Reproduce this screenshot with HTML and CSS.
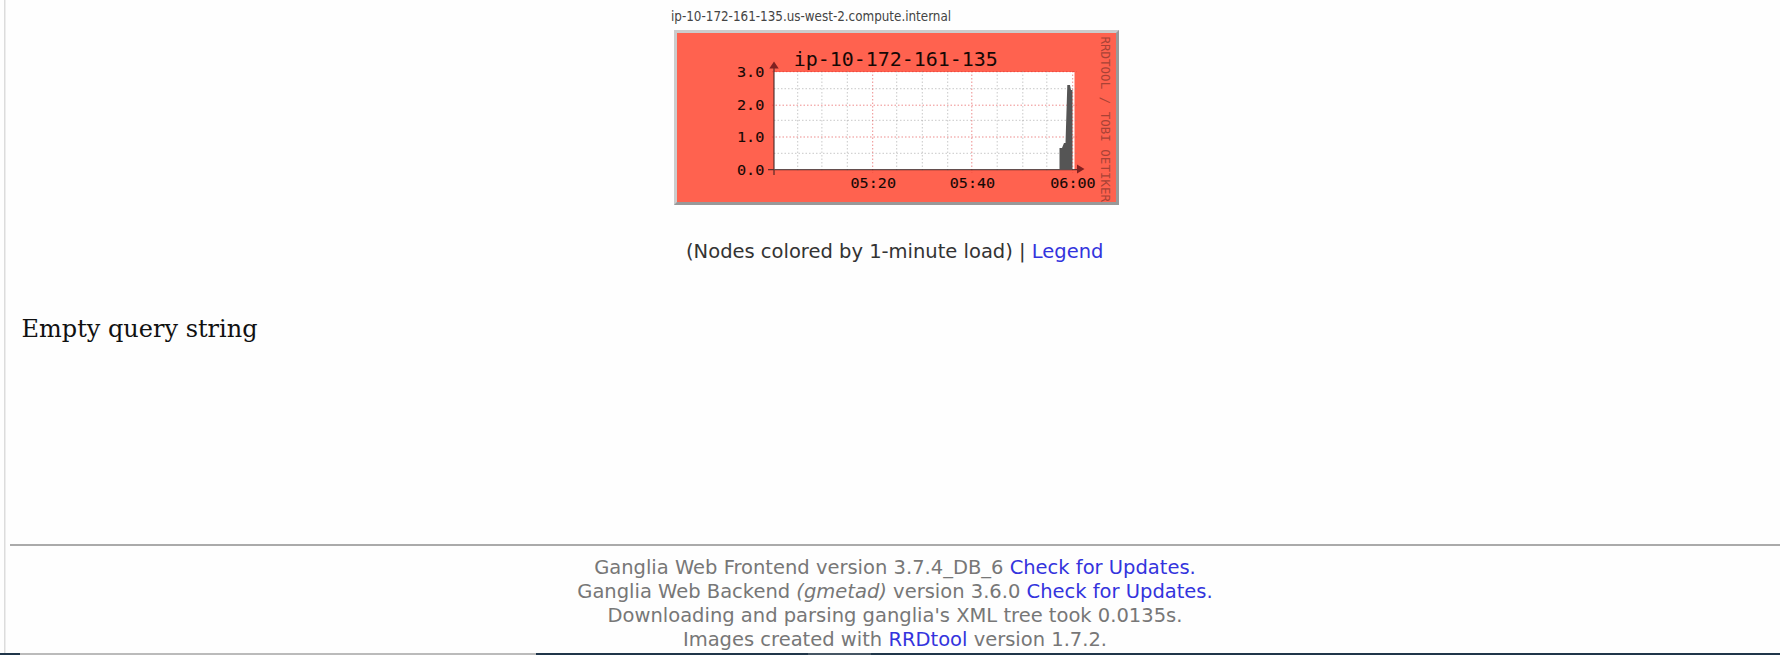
FILE: index.html
```html
<!DOCTYPE html>
<html lang="en">
<head>
<meta charset="utf-8">
<title>Ganglia</title>
<link rel="stylesheet" href="styles.css">
</head>
<body>
<div class="page">
  <main class="content">
    <section class="node">
      <div class="host">ip-10-172-161-135.us-west-2.compute.internal</div>
      <a class="graph">
        <svg width="439" height="169" viewBox="677 33 439 169">
          <rect x="774" y="72" width="300.5" height="98" fill="#fff"/>
          <g class="minor">
            <path d="M774 88.7H1077M774 120.3H1077M774 153.3H1077"/>
            <path d="M797.7 71V171M821.9 71V171M847.3 71V171M896.7 71V171M922.3 71V171M947.7 71V171M997.2 71V171M1022.8 71V171M1046.8 71V171"/>
          </g>
          <g class="major">
            <path d="M772 71.7H1077M772 105.2H1077M772 137H1077"/>
            <path d="M872.7 71V173M971.8 71V173"/>
          </g>
          <path d="M1059.5 169V148H1062L1064 143H1065.5L1067.3 85H1070L1071 90H1072.5V169Z" fill="#555"/>
          <path class="major" d="M1072.7 71V173"/>
          <path class="axis" d="M774 67V175M768 169.6H1080"/>
          <path class="arrow" d="M774 61.5L778.7 68.5H769.3ZM1084.5 169L1077 164.5V173.5Z"/>
          <text class="title" x="793.7" y="65.6" textLength="204" lengthAdjust="spacingAndGlyphs">ip-10-172-161-135</text>
          <g class="ticks">
            <text x="736.9" y="77.4" textLength="27.5" lengthAdjust="spacingAndGlyphs">3.0</text>
            <text x="736.9" y="110.4" textLength="27.5" lengthAdjust="spacingAndGlyphs">2.0</text>
            <text x="736.9" y="142" textLength="27.5" lengthAdjust="spacingAndGlyphs">1.0</text>
            <text x="736.9" y="174.9" textLength="27.5" lengthAdjust="spacingAndGlyphs">0.0</text>
            <text x="850.5" y="188.4" textLength="45.5" lengthAdjust="spacingAndGlyphs">05:20</text>
            <text x="949.7" y="188.4" textLength="45.5" lengthAdjust="spacingAndGlyphs">05:40</text>
            <text x="1050.2" y="188.4" textLength="45.5" lengthAdjust="spacingAndGlyphs">06:00</text>
          </g>
          <text class="mark" transform="translate(1101.4 36.5) rotate(90)" textLength="165.5" lengthAdjust="spacingAndGlyphs">RRDTOOL / TOBI OETIKER</text>
        </svg>
      </a>
    </section>
    <p class="note">(Nodes colored by 1-minute load) | <a>Legend</a></p>
    <p class="empty">Empty query string</p>
  </main>
  <footer class="footer">
    <div>Ganglia Web Frontend version 3.7.4_DB_6 <a>Check for Updates.</a></div>
    <div>Ganglia Web Backend <i>(gmetad)</i> version 3.6.0 <a>Check for Updates.</a></div>
    <div>Downloading and parsing ganglia's XML tree took 0.0135s.</div>
    <div>Images created with <a>RRDtool</a> version 1.7.2.</div>
  </footer>
  <div class="taskbar"><i class="grip"></i><i class="track"></i><i class="gap"></i><i class="thumb"></i></div>
</div>
</body>
</html>
```
FILE: styles.css
```css
body { margin: 0; background: #fefefe; }
.page {
  box-sizing: border-box;
  width: 1780px;
  height: 655px;
  display: flex;
  flex-direction: column;
  overflow: hidden;
  background: linear-gradient(#dcdcdc, #dcdcdc) 3.5px 0 / 1.5px 653px no-repeat;
}
.content { height: 544px; flex: none; }
.node { padding: 6px 0 0 671px; }
.host {
  height: 24px;
  font: 13.3px/22px "DejaVu Sans Condensed", "DejaVu Sans", sans-serif;
  font-stretch: condensed;
  color: #444;
  white-space: nowrap;
}
.graph {
  display: block;
  width: 439px;
  height: 169px;
  margin-left: 3px;
  border: 3px solid;
  border-color: #ccc #999 #999 #ccc;
  background: #ff624f;
}
.graph svg { display: block; }
.minor path { stroke: #888; stroke-opacity: .45; stroke-dasharray: 1.5 2; fill: none; }
.major path, path.major { stroke: #e03030; stroke-opacity: .55; stroke-dasharray: 1.5 2; fill: none; }
.axis { stroke: #3c2222; stroke-opacity: .8; stroke-width: 1.3; fill: none; }
.arrow { fill: #802020; }
.title, .ticks, .mark { font-family: "DejaVu Sans Mono", monospace; fill: #160805; }
.title { font-size: 18.6px; }
.ticks { font-size: 14px; stroke: #160805; stroke-width: .1px; }
.mark { font-size: 12px; fill: #a84236; }
.note {
  margin: 32px 0 0 686px;
  font: 19.5px/30px "DejaVu Sans", sans-serif;
  color: #333;
  white-space: nowrap;
}
.empty {
  margin: 45px 0 0 21.5px;
  font: 24px/34px "DejaVu Serif", serif;
  color: #111;
}
.note a, .footer a { color: #3333dd; }
.footer {
  flex: none;
  box-sizing: border-box;
  height: 109px;
  margin-left: 10px;
  padding-top: 10px;
  border-top: 2px solid #aaa;
  text-align: center;
  font: 19.5px/24px "DejaVu Sans", sans-serif;
  color: #777;
}
.taskbar { display: flex; height: 2px; background: #20364a; }
.grip { width: 20px; }
.track { width: 516px; background: #bbb; }
.gap { width: 272px; }
.thumb { width: 63px; background: #465664; }
```
